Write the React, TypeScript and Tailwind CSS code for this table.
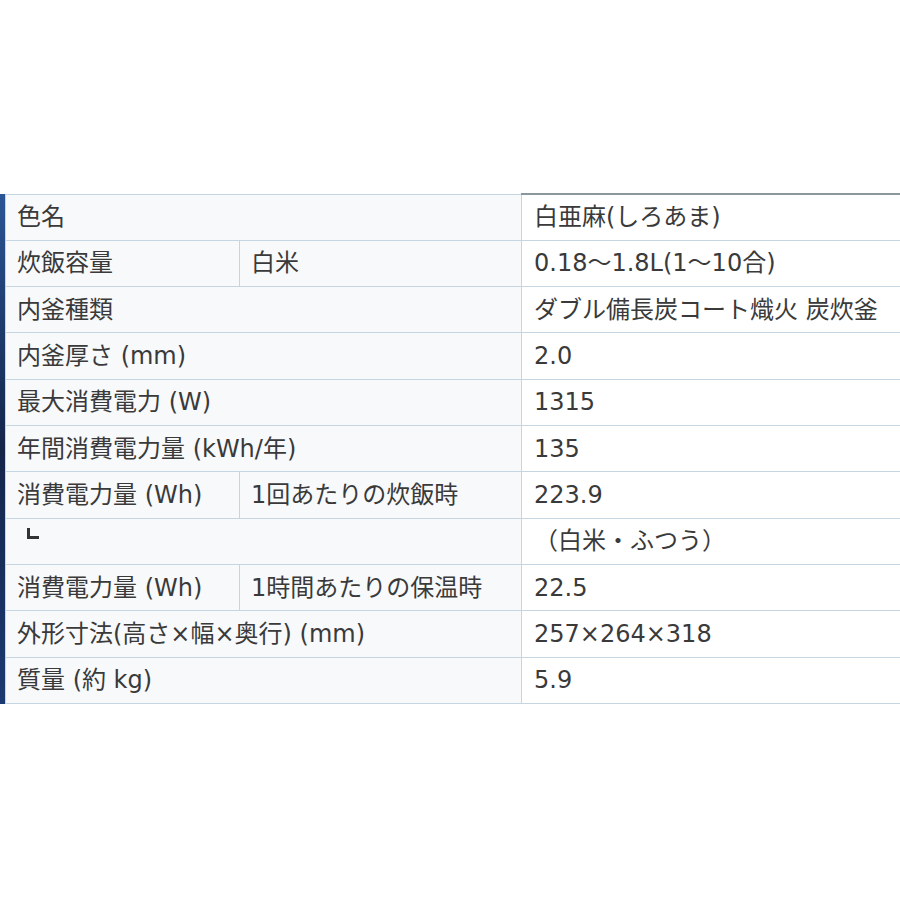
import React from "react";

const border = "border border-[#c6d5e2]";
const hd = `${border} bg-[#f8f9fa] pl-[11px] pr-2 py-0 align-middle text-left font-normal`;
const vd = `${border} bg-white pl-[12px] pr-2 py-0 align-middle text-left`;

type Row = { a: string; b?: string; v: string; first?: boolean; mark?: boolean };

const rows: Row[] = [
  { a: "色名", v: "白亜麻(しろあま)", first: true },
  { a: "炊飯容量", b: "白米", v: "0.18～1.8L(1～10合)" },
  { a: "内釜種類", v: "ダブル備長炭コート熾火 炭炊釜" },
  { a: "内釜厚さ (mm)", v: "2.0" },
  { a: "最大消費電力 (W)", v: "1315" },
  { a: "年間消費電力量 (kWh/年)", v: "135" },
  { a: "消費電力量 (Wh)", b: "1回あたりの炊飯時", v: "223.9" },
  { a: "", v: "（白米・ふつう）", mark: true },
  { a: "消費電力量 (Wh)", b: "1時間あたりの保温時", v: "22.5" },
  { a: "外形寸法(高さ×幅×奥行) (mm)", v: "257×264×318" },
  { a: "質量 (約 kg)", v: "5.9" },
];

export default function App() {
  return (
    <div
      className="w-[900px] h-[900px] bg-white overflow-hidden pt-[193px]"
      style={{ fontFamily: '"DejaVu Sans", "Noto Sans CJK JP", sans-serif' }}
    >
      <div className="flex">
        <div className="w-[5px] shrink-0 bg-gradient-to-b from-[#2a5596] via-[#14254a] to-[#1c3a72] h-[510px] mt-[1px]" />
        <table className="border-collapse table-fixed w-[1000px] shrink-0 text-[24px] leading-none text-[#3a3a3a]">
          <colgroup>
            <col className="w-[234px]" />
            <col className="w-[282px]" />
            <col className="w-[484px]" />
          </colgroup>
          <tbody>
            {rows.map((r, i) => (
              <tr key={i} className="h-[44.7px]">
                {r.b !== undefined ? (
                  <>
                    <th className={hd}>{r.a}</th>
                    <th className={hd}>{r.b}</th>
                  </>
                ) : (
                  <th colSpan={2} className={`${hd} ${r.mark ? "align-top pt-[9px]" : ""}`}>
                    {r.mark ? (
                      <span className="block ml-[10px] w-[12px] h-[11px] border-l-[3px] border-b-[3px] border-[#333]" />
                    ) : (
                      r.a
                    )}
                  </th>
                )}
                <td
                  className={`${vd} ${r.first ? "border-t-2 border-t-[#8a979c]" : ""} ${r.mark ? "pl-0" : ""}`}
                >
                  {r.v}
                </td>
              </tr>
            ))}
          </tbody>
        </table>
      </div>
    </div>
  );
}
